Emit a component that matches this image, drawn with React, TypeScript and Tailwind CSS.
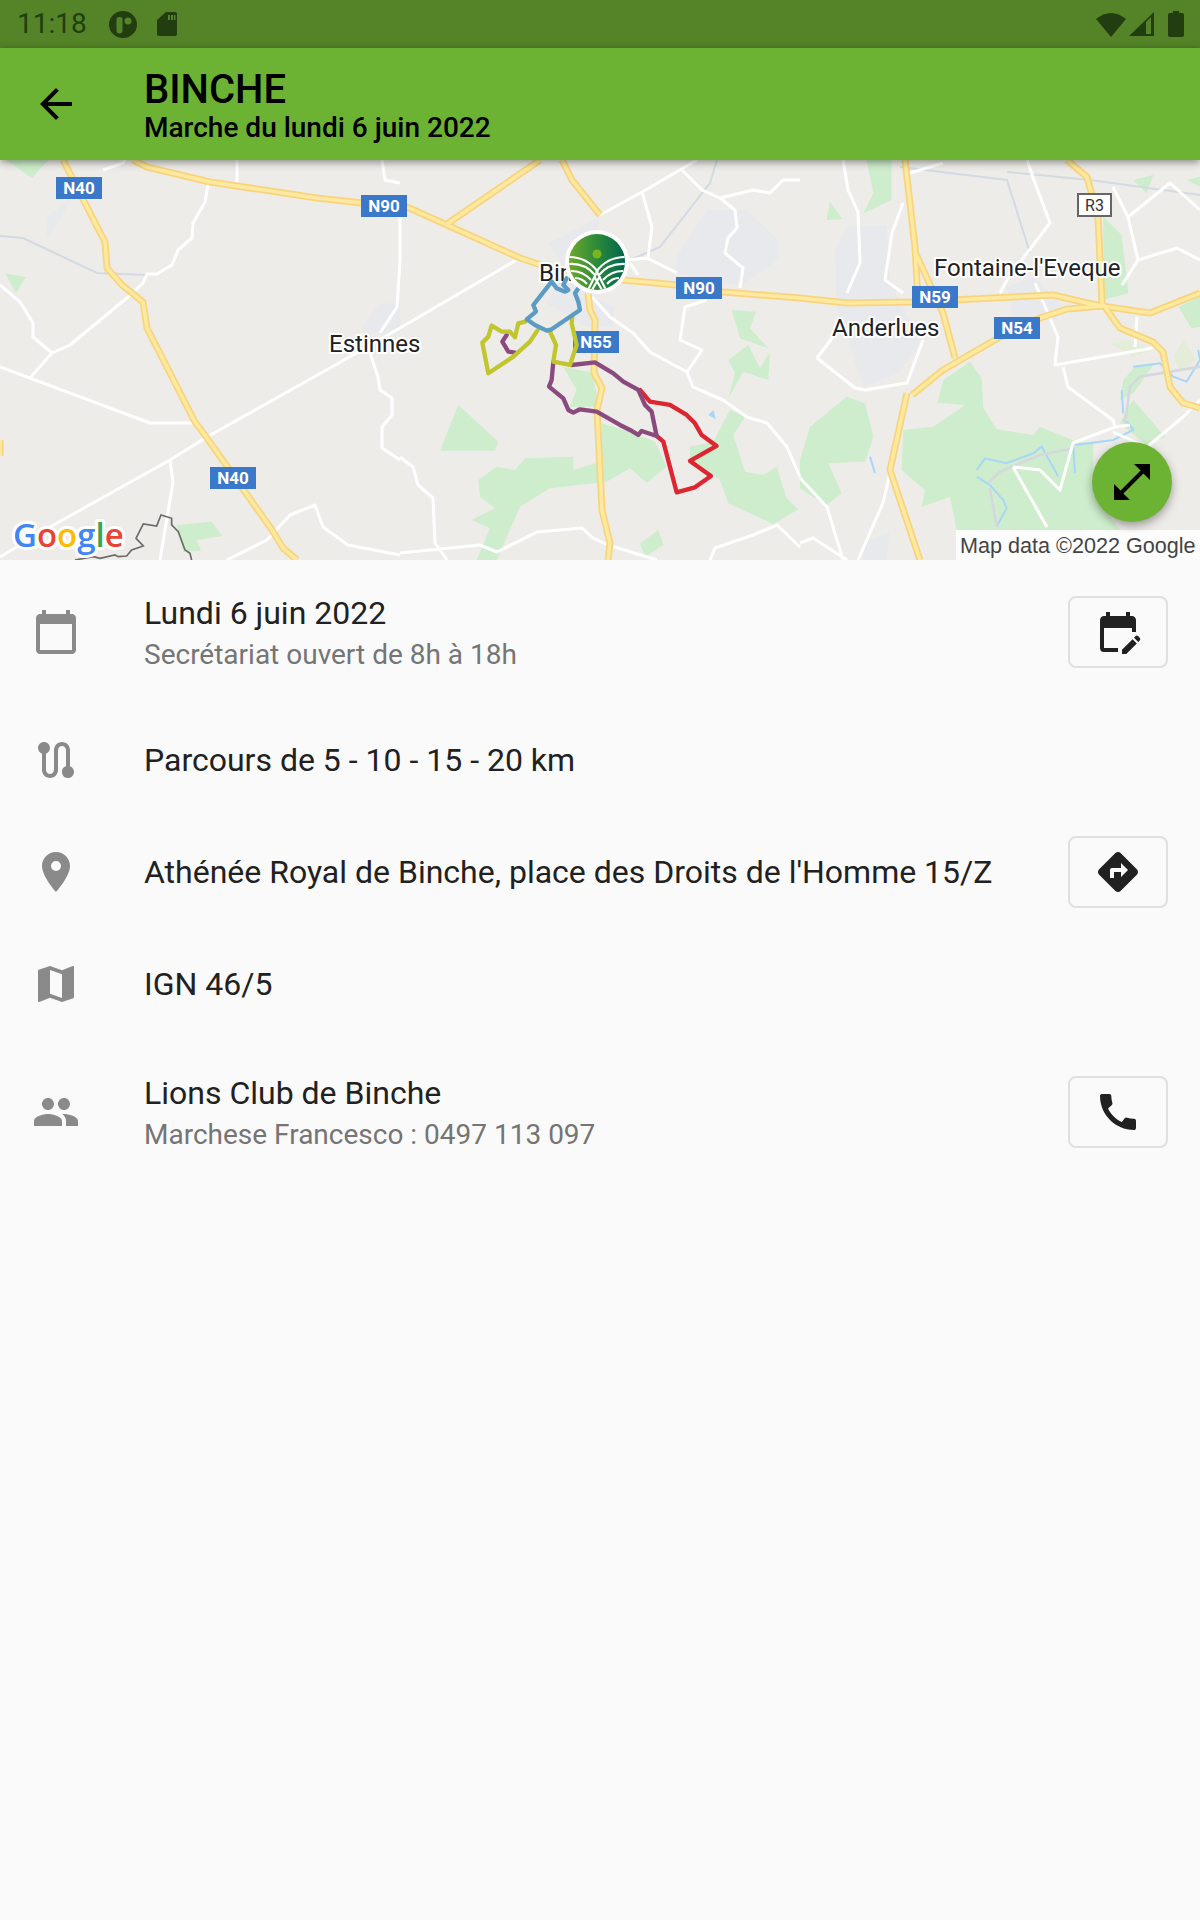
import React from "react";
import {
  MdArrowBack,
  MdCalendarToday,
  MdEditCalendar,
  MdRoute,
  MdLocationOn,
  MdMap,
  MdPeople,
  MdDirections,
  MdCall,
  MdOpenInFull,
} from "react-icons/md";

const yellow = [
  "63,160 105,242 107,268 122,285 143,302 147,328 195,422 207,438 272,530 283,548 297,560",
  "133,160 147,167 210,182 317,198 362,203 407,207 447,225 520,258 547,267 623,280 677,285 723,292 800,298 847,303 913,302 1053,295 1087,303 1102,306 1150,313 1200,293",
  "447,224 540,160",
  "562,160 572,180 600,215",
  "588,293 590,310 595,320 594,373 602,388 597,410 602,510 610,543 608,560",
  "905,160 915,247 918,300",
  "915,252 943,313 955,358",
  "912,395 943,370 1000,337 1040,318 1067,309 1102,306",
  "907,393 890,470 920,560",
  "1067,160 1087,177 1098,217 1102,303 1120,328 1153,342 1163,352 1170,387 1183,403 1200,408",
  "0,440 0,456",
];

const white = [
  "237,160 237,182",
  "208,185 205,202 193,223 192,238 178,250 172,265 157,274 147,274 143,283 128,297 70,345 52,353 30,378",
  "0,285 20,302 33,323 33,337 52,353",
  "0,367 150,423 193,423",
  "520,258 400,328 353,355 207,437 170,460 50,527 0,557",
  "170,460 173,482 160,560",
  "370,353 378,377 380,390 392,398 392,415 382,427 382,448 400,460",
  "380,333 397,307 400,260 400,217",
  "227,560 267,540 290,515 315,505 323,527 348,545 400,555",
  "125,160 123,163 103,170",
  "382,160 385,180 400,183",
  "682,170 702,190 720,198 735,210 737,228 728,238 725,253 743,268 740,288",
  "600,215 642,192 697,160",
  "642,192 652,227 648,257",
  "627,260 647,258 677,273",
  "630,263 638,275",
  "720,198 753,190 770,193 783,180 800,180",
  "592,297 610,317 633,333 650,352 687,372 693,387 723,400 747,417 767,423 787,447 800,477",
  "707,300 685,307 680,340 702,350 687,372",
  "400,457 413,467 418,485 433,498 435,543 447,560",
  "400,553 480,545 497,552 537,532 582,528 593,538 608,545 657,560",
  "710,560 715,548 753,535 777,525 800,547",
  "843,160 848,190 858,212 860,263 847,293",
  "910,173 943,163",
  "903,203 892,233 885,280 903,293",
  "1000,293 1008,278 1050,223 1035,183 1027,160",
  "1035,283 1058,337 1055,365 1153,348",
  "1063,367 1068,387 1113,420 1115,427",
  "817,358 855,388 865,390 907,383 923,340",
  "833,337 817,358",
  "1128,217 1138,260 1177,248 1200,260",
  "1128,217 1170,183 1200,210",
  "1113,187 1128,217",
  "1138,260 1122,285",
  "1137,317 1135,347",
  "800,478 827,507 843,560",
  "890,473 883,503 858,560",
  "1013,467 1047,527",
  "1013,467 1040,470 1060,490 1073,443 1115,427 1130,425",
  "1113,432 1147,447 1183,417 1200,400",
  "800,543 813,538 847,560",
];

const rails = [
  "0,236 23,238 97,273 147,275",
  "717,160 710,183 660,247 630,260",
  "900,167 1007,180 1030,253",
  "1007,172 1090,180 1200,195",
];

const P3 = "translate(0 160) scale(0.3333)";
const P4 = "translate(400 160) scale(0.3333)";
const P5 = "translate(800 160) scale(0.3333)";

const Poly = ({ items, fill }: { items: string[]; fill: string }) => (
  <>
    {items.map((p) => (
      <polygon key={p} points={p} fill={fill} />
    ))}
  </>
);

const Shield = ({ x, y, t }: { x: number; y: number; t: string }) => (
  <g>
    <rect x={x} y={y} width={46} height={22} fill="#3A78C9" />
    <text x={x + 23} y={y + 17} textAnchor="middle" fontSize={17} fontWeight={700} fill="#fff" fontFamily="Roboto, sans-serif">
      {t}
    </text>
  </g>
);

const Label = ({ x, y, t }: { x: number; y: number; t: string }) => (
  <text
    x={x}
    y={y}
    fontSize={24}
    fill="#202124"
    stroke="#fff"
    strokeWidth={4}
    strokeLinejoin="round"
    paintOrder="stroke"
    fontFamily="Roboto, sans-serif"
  >
    {t}
  </text>
);

const Route = ({ d, c }: { d: string; c: string }) => (
  <polyline points={d} fill="none" stroke={c} strokeWidth={13} strokeLinejoin="round" strokeLinecap="round" />
);

function MapArt() {
  return (
    <svg viewBox="0 160 1200 400" className="block w-full h-[400px]">
      <defs>
        <linearGradient id="logoG" x1="0" x2="1" y1="0" y2="0">
          <stop offset="0" stopColor="#6FA82B" />
          <stop offset="0.5" stopColor="#2B8A3A" />
          <stop offset="1" stopColor="#00664C" />
        </linearGradient>
        <clipPath id="logoC">
          <circle cx="0" cy="0" r="28" />
        </clipPath>
      </defs>
      <rect x="0" y="160" width="1200" height="400" fill="#EDECE8" />

      <g transform={P4}>
        <Poly
          fill="#E8E9EC"
          items={[
            "830,290 920,150 1040,150 1135,240 1135,300 1030,370 960,375 830,340",
            "445,250 600,170 560,400 640,440 640,500 560,500 440,430 500,330",
          ]}
        />
      </g>
      <g transform={P5}>
        <Poly
          fill="#E8E9EC"
          items={[
            "105,270 140,200 260,195 270,360 360,550 295,640 190,680 110,440",
            "620,380 700,350 790,440 770,480 640,480",
            "190,1200 200,1140 270,1120 260,1200",
          ]}
        />
      </g>
      <g transform={P3}>
        <Poly
          fill="#E8E9EC"
          items={["140,170 210,120 180,180 140,235", "1090,495 1140,430 1200,430 1200,520 1090,520"]}
        />
        <Poly
          fill="#CEEDCC"
          items={[
            "15,340 78,352 48,398",
            "530,1095 635,1085 668,1128 590,1140 603,1172 550,1175",
            "20,0 145,0 95,55",
          ]}
        />
      </g>
      <g transform={P4}>
        <Poly
          fill="#CEEDCC"
          items={[
            "175,735 295,845 285,872 120,872",
            "235,960 290,920 345,930 375,895 520,890 520,930 600,905 605,790 700,820 765,845 800,920 740,968 690,925 620,965 450,985 360,1040 290,1200 230,1200 270,1105 215,1080 285,1045 240,1010",
            "870,860 940,845 990,750 1035,770 1000,825 1035,935 1090,945 1130,920 1160,1015 1195,1048 1120,1092 985,1030 960,960 870,900",
            "995,450 1068,455 1050,505 1105,565 1020,535",
            "985,600 1045,555 1080,625 1110,575 1105,660 1030,635 985,715 1005,640",
            "490,620 580,640 585,680 600,740 510,740 530,690",
            "720,1150 775,1110 790,1155 735,1190",
          ]}
        />
        <polygon points="940,750 925,765 948,778" fill="#A8D6FA" />
      </g>
      <g transform={P5}>
        <Poly
          fill="#CEEDCC"
          items={[
            "200,0 275,0 275,120 190,160 220,100",
            "80,180 90,125 128,178",
            "30,800 140,710 195,730 220,830 195,905 85,910 125,1000 80,1035 0,985 0,900",
            "310,810 400,800 495,735 412,728 430,660 510,605 545,655 550,745 590,808 700,825 720,800 830,845 880,850 880,1000 960,1110 470,1110 450,1010 365,1040 375,990 305,930",
            "970,660 1010,615 1060,615 1000,700 960,720",
            "1000,720 1095,830 1040,855 960,790 985,740",
            "910,170 965,225 985,400 910,420",
            "1000,60 1060,45 1040,100",
            "1135,440 1200,410 1200,500 1175,505",
            "1160,60 1200,50 1200,80",
          ]}
        />
        <Poly fill="#E4EDD8" items={["930,550 990,540 1060,570 1000,590", "1120,590 1150,540 1190,600 1140,630"]} />
        {[
          "530,930 555,895 620,910 700,880 725,860 775,950",
          "530,950 570,975 610,1020 620,1045 590,1100",
          "820,860 825,940",
          "825,855 940,840 1000,810 985,790 970,780",
          "965,690 970,760",
          "1000,620 1080,610 1120,650 1160,665 1200,600 1195,570",
          "210,890 225,940",
        ].map((p) => (
          <polyline key={p} points={p} fill="none" stroke="#A8D6FA" strokeWidth={6} />
        ))}
        {[
          "565,970 600,935 720,885 820,865",
          "570,985 590,1100",
          "975,790 990,680 1020,650 1080,640 1200,620",
        ].map((p) => (
          <polyline key={p} points={p} fill="none" stroke="#D5D8DC" strokeWidth={8} />
        ))}
      </g>

      {rails.map((p) => (
        <polyline key={p} points={p} fill="none" stroke="#D3DAE2" strokeWidth={2} />
      ))}
      {white.map((p) => (
        <polyline key={p} points={p} fill="none" stroke="#fff" strokeWidth={3} strokeLinejoin="round" />
      ))}
      {yellow.map((p) => (
        <polyline key={p + "o"} points={p} fill="none" stroke="#F9D47C" strokeWidth={7} strokeLinejoin="round" />
      ))}
      {yellow.map((p) => (
        <polyline key={p + "i"} points={p} fill="none" stroke="#FDE9A0" strokeWidth={3.5} strokeLinejoin="round" />
      ))}

      <g transform={P3}>
        <polyline
          points="225,1200 280,1190 300,1195 345,1185 355,1190 380,1188 395,1170 430,1158 408,1135 430,1092 470,1098 483,1065 515,1075 515,1095 535,1115 555,1170 570,1180 575,1200"
          fill="none"
          stroke="#6B6B6B"
          strokeWidth={5}
        />
      </g>

      <Shield x={56} y={177} t="N40" />
      <Shield x={361} y={195} t="N90" />
      <Shield x={210} y={467} t="N40" />
      <Shield x={676} y={277} t="N90" />
      <Shield x={573} y={331} t="N55" />
      <Shield x={912} y={286} t="N59" />
      <Shield x={994} y={317} t="N54" />
      <rect x={1078} y={194} width={33} height={22} fill="#fff" stroke="#666" strokeWidth={2} />
      <text x={1094.5} y={211} textAnchor="middle" fontSize={16} fill="#333" fontFamily="Roboto, sans-serif">
        R3
      </text>

      <Label x={329} y={352} t="Estinnes" />
      <Label x={539} y={281} t="Binche" />
      <Label x={934} y={276} t="Fontaine-l'Eveque" />
      <Label x={832} y={336} t="Anderlues" />

      <g transform={P4}>
        <Route c="#8B4A7E" d="320,525 307,545 325,575 345,578" />
        <Route c="#DD2631" d="720,690 750,725 810,735 860,765 885,790 905,825 950,858 870,903 933,948 885,982 830,997 790,845 770,828" />
        <Route c="#8B4A7E" d="460,605 455,660 447,680 490,715 505,750 520,758 540,748 590,755 660,795 690,810 715,825 725,813 770,828 755,755 735,735 715,690 670,665 640,640 585,607 515,615" />
        <Route c="#C1C62F" d="375,485 355,490 345,532 330,515 305,515 275,497 265,530 247,548 265,640 340,590 390,545 412,512" />
        <Route c="#C1C62F" d="450,515 468,555 460,605 510,615 530,555 515,490 517,470" />
        <Route c="#5B9BC4" d="500,355 490,375 505,390 495,395 470,385 455,365 400,435 408,455 380,478 405,495 440,512 455,508 540,450 535,425 525,400 535,385" />
      </g>

      <g transform="translate(597 262)">
        <circle r="32" fill="#fff" />
        <g clipPath="url(#logoC)">
          <rect x="-28" y="-28" width="56" height="56" fill="url(#logoG)" />
          <circle cx="0" cy="-8" r="4.500" fill="#7AB51D" />
          <g fill="none" stroke="#fff" strokeWidth="2.200">
            <path d="M-28,-5 Q-10,-5 1,10" />
            <path d="M-28,2 Q-12,1 -2,13" />
            <path d="M-26,9 Q-14,9 -6,18" />
            <path d="M-22,16 Q-15,16 -10,22" />
            <path d="M28,-5 Q10,-5 -1,10" />
            <path d="M28,2 Q12,1 2,13" />
            <path d="M26,9 Q14,9 6,18" />
            <path d="M22,16 Q15,16 10,22" />
            <path d="M0,10 L-9,28 M0,10 L9,28 M-3,14 L5,28 M3,14 L-5,28" />
          </g>
        </g>
      </g>

      <text
        x={13}
        y={547}
        fontSize={33}
        fontWeight={600}
        stroke="#fff"
        strokeWidth={6}
        strokeLinejoin="round"
        paintOrder="stroke"
        fontFamily="'Open Sans', sans-serif"
      >
        <tspan fill="#4285F4">G</tspan>
        <tspan fill="#EA4335">o</tspan>
        <tspan fill="#FBBC05">o</tspan>
        <tspan fill="#4285F4">g</tspan>
        <tspan fill="#34A853">l</tspan>
        <tspan fill="#EA4335">e</tspan>
      </text>
    </svg>
  );
}

function StatusBar() {
  return (
    <div className="h-12 bg-[#548427] flex items-center justify-between pl-[17px] pr-4 text-[#223D10]">
      <div className="flex items-center">
        <span className="text-[28px] leading-none w-[92px]">11:18</span>
        <svg width="28" height="27" viewBox="0 0 28 27">
          <path
            fillRule="evenodd"
            fill="currentColor"
            d="M14 0a14 13.5 0 1 1 0 27a14 13.5 0 1 1 0-27zM10 6a2.5 2.5 0 0 0-2.5 2.5v11a3 3 0 0 0 6 0v-11A2.5 2.5 0 0 0 11 6zM19 6.500a3.500 3.500 0 1 0 0 7a3.500 3.500 0 1 0 0-7z"
          />
        </svg>
        <svg width="20" height="24" viewBox="0 0 20 24" className="ml-5">
          <path
            fillRule="evenodd"
            fill="currentColor"
            d="M9 0h9a2 2 0 0 1 2 2v20a2 2 0 0 1-2 2H2a2 2 0 0 1-2-2V8zM11 3v5h2V3zM14 3v5h2V3zM17 3v5h1.500V3z"
          />
        </svg>
      </div>
      <div className="flex items-center">
        <svg width="30" height="26" viewBox="0 0 30 26">
          <path fill="currentColor" d="M15 26L0 8Q15-4 30 8z" />
        </svg>
        <svg width="25" height="24" viewBox="0 0 25 24" className="ml-[3px]">
          <path fillRule="evenodd" fill="currentColor" d="M0 24L25 0v24zM17 22h5V5l-5 5z" />
        </svg>
        <svg width="16" height="26" viewBox="0 0 16 26" className="ml-[14px]">
          <path fill="currentColor" d="M5 0h6v2h3a2 2 0 0 1 2 2v20a2 2 0 0 1-2 2H2a2 2 0 0 1-2-2V4a2 2 0 0 1 2-2h3z" />
        </svg>
      </div>
    </div>
  );
}

const ActionButton = ({ children }: { children: React.ReactNode }) => (
  <div className="w-[100px] h-[72px] shrink-0 rounded-lg border-2 border-[#E0E0E0] flex items-center justify-center text-[#212121]">
    {children}
  </div>
);

const Row = ({
  icon,
  title,
  sub,
  action,
  tall,
}: {
  icon: React.ReactNode;
  title: string;
  sub?: string;
  action?: React.ReactNode;
  tall?: boolean;
}) => (
  <div className={`flex items-center pl-8 pr-8 ${tall ? "h-[144px]" : "h-[112px]"}`}>
    <div className="w-12 h-12 shrink-0 text-[#8A8A8A]">{icon}</div>
    <div className={`flex-1 ml-16 min-w-0 ${sub ? "pt-1" : ""}`}>
      <div className="text-[32px] leading-[40px] text-[#212121] whitespace-nowrap">{title}</div>
      {sub && <div className="mt-[2px] text-[28px] leading-[40px] text-[#757575] whitespace-nowrap">{sub}</div>}
    </div>
    {action && <ActionButton>{action}</ActionButton>}
  </div>
);

export default function App() {
  return (
    <div className="w-full min-h-[1920px] bg-[#FAFAFA] [font-family:Roboto,sans-serif]">
      <StatusBar />
      <header className="relative z-10 h-28 bg-[#6DB333] flex items-center pl-8 shadow-[0_2px_8px_rgba(0,0,0,0.45)] text-black">
        <MdArrowBack size={48} className="shrink-0" />
        <div className="ml-16">
          <div className="text-[40px] leading-[48px] font-medium">BINCHE</div>
          <div className="text-[28px] leading-[28px] font-medium">Marche du lundi 6 juin 2022</div>
        </div>
      </header>
      <div className="relative h-[400px] overflow-hidden">
        <MapArt />
        <div className="absolute right-0 bottom-0 h-[30px] w-[244px] bg-white/90 text-[#444] text-[21.6px] leading-[32px] pl-1 [font-family:'Liberation_Sans',sans-serif] whitespace-nowrap">
          Map data ©2022 Google
        </div>
        <div className="absolute left-[1092px] top-[282px] w-20 h-20 rounded-full bg-[#6DB333] flex items-center justify-center shadow-[0_4px_10px_rgba(0,0,0,0.35)] text-black">
          <MdOpenInFull size={48} />
        </div>
      </div>
      <Row tall icon={<MdCalendarToday size={48} />} title="Lundi 6 juin 2022" sub="Secrétariat ouvert de 8h à 18h" action={<MdEditCalendar size={48} />} />
      <Row icon={<MdRoute size={48} />} title="Parcours de 5 - 10 - 15 - 20 km" />
      <Row
        icon={<MdLocationOn size={48} />}
        title="Athénée Royal de Binche, place des Droits de l'Homme 15/Z"
        action={<MdDirections size={48} />}
      />
      <Row icon={<MdMap size={48} />} title="IGN 46/5" />
      <Row
        tall
        icon={<MdPeople size={48} />}
        title="Lions Club de Binche"
        sub="Marchese Francesco : 0497 113 097"
        action={<MdCall size={48} />}
      />
    </div>
  );
}
